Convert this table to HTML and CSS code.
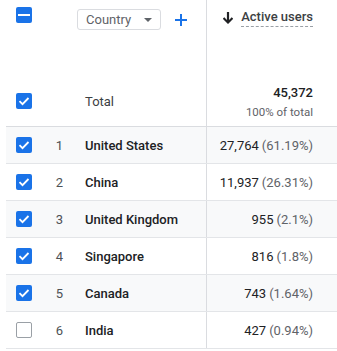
FILE: index.html
```html
<!DOCTYPE html>
<html>
<head>
<meta charset="utf-8">
<link rel="stylesheet" href="styles.css">
</head>
<body>
<div class="table">
  <div class="row head">
    <div class="c-check"><span class="cb on indet"><span class="dash"></span></span></div>
    <div class="c-rank"></div>
    <div class="c-dim">
      <span class="chip">Country<svg class="caret" width="8" height="4" viewBox="0 0 8 4"><path d="M0 0h8L4 4z" fill="#5f6368"/></svg></span>
      <svg class="plus" width="12" height="12" viewBox="0 0 12 12"><path d="M5 0h2v5h5v2H7v5H5V7H0V5h5z" fill="#1a73e8"/></svg>
    </div>
    <div class="c-metric">
      <span class="sort"><svg class="arrow" width="10" height="12" viewBox="0 0 10 12"><path d="M3.9 0h2.2v7.9l2.6-2.6L10.2 6.8 5 12-0.2 6.8l1.5-1.5 2.6 2.6z" fill="#202124"/></svg><span class="lbl">Active users</span></span>
    </div>
  </div>
  <div class="row total">
    <div class="c-check"><span class="cb on"><svg width="16" height="16" viewBox="0 0 16 16"><path d="M3.5 8.2l3 3 6-6.2" stroke="#fff" stroke-width="1.8" fill="none"/></svg></span></div>
    <div class="c-rank"></div>
    <div class="c-dim"><span class="total-lbl">Total</span></div>
    <div class="c-metric"><div class="tnum">45,372</div><div class="tsub">100% of total</div></div>
  </div>
  <div class="row data alt">
    <div class="c-check"><span class="cb on"><svg width="16" height="16" viewBox="0 0 16 16"><path d="M3.5 8.2l3 3 6-6.2" stroke="#fff" stroke-width="1.8" fill="none"/></svg></span></div>
    <div class="c-rank">1</div>
    <div class="c-dim name">United States</div>
    <div class="c-metric"><span class="val">27,764</span><span class="pct">(61.19%)</span></div>
  </div>
  <div class="row data">
    <div class="c-check"><span class="cb on"><svg width="16" height="16" viewBox="0 0 16 16"><path d="M3.5 8.2l3 3 6-6.2" stroke="#fff" stroke-width="1.8" fill="none"/></svg></span></div>
    <div class="c-rank">2</div>
    <div class="c-dim name">China</div>
    <div class="c-metric"><span class="val">11,937</span><span class="pct">(26.31%)</span></div>
  </div>
  <div class="row data alt">
    <div class="c-check"><span class="cb on"><svg width="16" height="16" viewBox="0 0 16 16"><path d="M3.5 8.2l3 3 6-6.2" stroke="#fff" stroke-width="1.8" fill="none"/></svg></span></div>
    <div class="c-rank">3</div>
    <div class="c-dim name">United Kingdom</div>
    <div class="c-metric"><span class="val">955</span><span class="pct">(2.1%)</span></div>
  </div>
  <div class="row data">
    <div class="c-check"><span class="cb on"><svg width="16" height="16" viewBox="0 0 16 16"><path d="M3.5 8.2l3 3 6-6.2" stroke="#fff" stroke-width="1.8" fill="none"/></svg></span></div>
    <div class="c-rank">4</div>
    <div class="c-dim name">Singapore</div>
    <div class="c-metric"><span class="val">816</span><span class="pct">(1.8%)</span></div>
  </div>
  <div class="row data alt">
    <div class="c-check"><span class="cb on"><svg width="16" height="16" viewBox="0 0 16 16"><path d="M3.5 8.2l3 3 6-6.2" stroke="#fff" stroke-width="1.8" fill="none"/></svg></span></div>
    <div class="c-rank">5</div>
    <div class="c-dim name">Canada</div>
    <div class="c-metric"><span class="val">743</span><span class="pct">(1.64%)</span></div>
  </div>
  <div class="row data">
    <div class="c-check"><span class="cb"></span></div>
    <div class="c-rank">6</div>
    <div class="c-dim name">India</div>
    <div class="c-metric"><span class="val">427</span><span class="pct">(0.94%)</span></div>
  </div>
</div>
</body>
</html>
```
FILE: styles.css
```css
* { box-sizing: border-box; }
html, body { margin: 0; padding: 0; background: #fff; }
body {
  font-family: Roboto, "Noto Sans", Arial, sans-serif;
  color: #202124;
  width: 337px;
  height: 351px;
  overflow: hidden;
}
.table { margin-left: 6px; }
.row {
  display: grid;
  grid-template-columns: 40px 31px 129px 131px;
}
.c-check { padding-left: 10px; display: flex; align-items: center; }
.c-rank { display: flex; align-items: center; justify-content: center; font-size: 13px; color: #4d5156; padding-right: 4px; }
.c-dim { display: flex; align-items: center; padding-left: 8px; }
.c-metric {
  border-left: 1px solid #dadce0;
  display: flex;
  flex-direction: column;
  align-items: flex-end;
  justify-content: center;
  padding-right: 24px;
}
.cb {
  width: 16px; height: 16px;
  border: 1.5px solid #9aa0a6;
  border-radius: 2px;
  display: inline-flex;
  align-items: center; justify-content: center;
  background: #fff;
}
.cb.on { background: #1a73e8; border: none; }
.cb svg { display: block; }
.dash { width: 12px; height: 2px; background: #fff; }

.head { height: 76px; }
.head .c-check { align-items: flex-start; padding-top: 7px; }
.head .c-dim { align-items: flex-start; padding-left: 0; padding-top: 9px; }
.chip {
  display: inline-flex; align-items: center;
  height: 21px; width: 84px;
  border: 1px solid #dadce0;
  border-radius: 3px;
  padding-left: 8px;
  font-size: 13px;
  color: #5f6368;
}
.caret { margin-left: 13px; }
.plus { margin-left: 14px; margin-top: 5px; }
.head .c-metric { justify-content: flex-start; padding-top: 9px; }
.sort { display: flex; align-items: center; }
.arrow { margin-right: 8px; }
.lbl {
  font-size: 13px; font-weight: 500; color: #3c4043;
  border-bottom: 1px dashed #9aa0a6;
  padding-bottom: 2px;
  line-height: 15px;
}

.total { height: 51px; border-bottom: 1px solid #dadce0; }
.total-lbl { font-size: 13px; color: #3c4043; }
.tnum { font-size: 13px; font-weight: 500; line-height: 15px; margin-top: 2px; }
.tsub { font-size: 11.5px; color: #5f6368; line-height: 14px; margin-top: 5px; }

.data { height: 37px; border-bottom: 1px solid #e3e5e8; }
.data.alt { background: #f8f9fa; }
.name { font-size: 13px; font-weight: 500; }
.data .c-metric { flex-direction: row; align-items: center; justify-content: flex-end; font-size: 13px; }
.val { color: #202124; margin-right: 3px; }
.pct { color: #5f6368; }
```
